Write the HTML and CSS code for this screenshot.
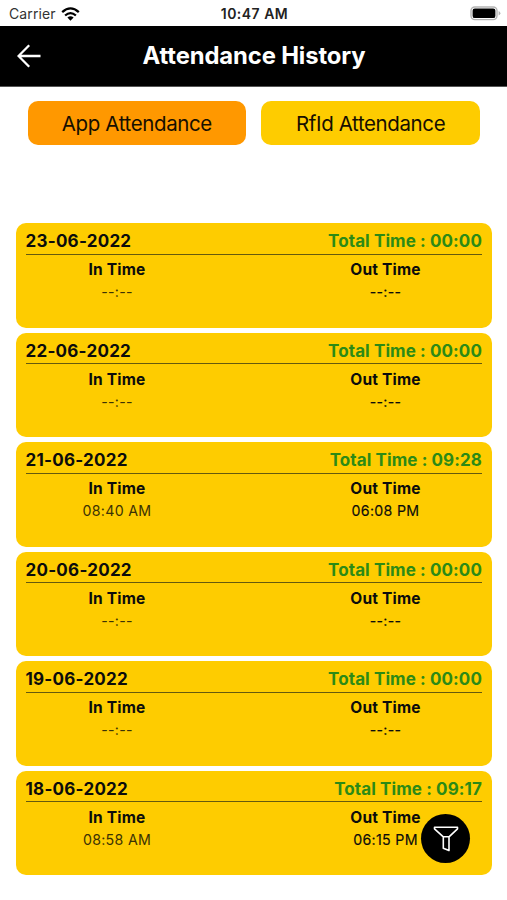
FILE: index.html
```html
<!DOCTYPE html>
<html lang="en">
<head>
<meta charset="utf-8">
<title>Attendance History</title>
<link rel="stylesheet" href="styles.css">
</head>
<body>
<div class="status">
  <div class="carrier"><span>Carrier</span>
    <svg class="wifi" width="19" height="14" viewBox="0 0 19 14"><g fill="none" stroke="#000" stroke-width="2.3"><path d="M1.2 5.2Q9.5-2.4 17.8 5.2"/><path d="M4.1 8.5Q9.5 3.7 14.9 8.5"/></g><path d="M6.4 10.6Q9.5 8 12.6 10.6L9.5 13.8Z"/></svg>
  </div>
  <div class="clock">10:47 AM</div>
  <svg class="battery" width="31" height="15" viewBox="0 0 31 15"><rect x="1" y="1" width="26" height="12.6" rx="3.8" fill="#fff" stroke="#b4b4b4" stroke-width="1.4"/><rect x="2.6" y="2.5" width="22.8" height="9.6" rx="2.2"/><path d="M28.6 5.1Q30.4 5.8 30.4 7.3T28.6 9.5Z" fill="#b4b4b4"/></svg>
</div>
<header class="header">
  <svg class="back" width="24" height="24" viewBox="0 0 24 24" fill="none" stroke="#fff" stroke-width="2.3"><path d="M23.5 12H2M12.2 1.2L1.5 12L12.2 22.8"/></svg>
  <h1 class="title">Attendance History</h1>
</header>
<nav class="tabs">
  <button class="tab active"><span>App Attendance</span></button>
  <button class="tab"><span>RfId Attendance</span></button>
</nav>
<main class="list">
  <article class="card">
    <div class="top"><span class="date">23-06-2022</span><span class="total">Total Time : 00:00</span></div>
    <div class="times"><div class="in"><b>In Time</b><span>--:--</span></div><div class="out"><b>Out Time</b><span>--:--</span></div></div>
  </article>
  <article class="card">
    <div class="top"><span class="date">22-06-2022</span><span class="total">Total Time : 00:00</span></div>
    <div class="times"><div class="in"><b>In Time</b><span>--:--</span></div><div class="out"><b>Out Time</b><span>--:--</span></div></div>
  </article>
  <article class="card">
    <div class="top"><span class="date">21-06-2022</span><span class="total">Total Time : 09:28</span></div>
    <div class="times"><div class="in"><b>In Time</b><span>08:40 AM</span></div><div class="out"><b>Out Time</b><span>06:08 PM</span></div></div>
  </article>
  <article class="card">
    <div class="top"><span class="date">20-06-2022</span><span class="total">Total Time : 00:00</span></div>
    <div class="times"><div class="in"><b>In Time</b><span>--:--</span></div><div class="out"><b>Out Time</b><span>--:--</span></div></div>
  </article>
  <article class="card">
    <div class="top"><span class="date">19-06-2022</span><span class="total">Total Time : 00:00</span></div>
    <div class="times"><div class="in"><b>In Time</b><span>--:--</span></div><div class="out"><b>Out Time</b><span>--:--</span></div></div>
  </article>
  <article class="card">
    <div class="top"><span class="date">18-06-2022</span><span class="total">Total Time : 09:17</span></div>
    <div class="times"><div class="in"><b>In Time</b><span>08:58 AM</span></div><div class="out"><b>Out Time</b><span>06:15 PM</span></div></div>
  </article>
</main>
<button class="filter" aria-label="Filter">
  <svg width="26" height="26" viewBox="0 0 26 26" fill="none" stroke="#fff" stroke-width="1.6" stroke-linejoin="round"><path d="M1.5 1.3H24.5V2.8L16 10.8V24.6L10.3 22.2V10.8L1.5 2.8ZM10.3 10.8H16"/></svg>
</button>
</body>
</html>
```

FILE: styles.css
```css
* { box-sizing: border-box; }
body {
  margin: 0;
  width: 507px;
  height: 900px;
  overflow: hidden;
  position: relative;
  background: #fff;
  color: #0c0c0c;
  font-family: Inter, "Liberation Sans", sans-serif;
}
.status {
  height: 25.5px;
  display: grid;
  grid-template-columns: 1fr auto 1fr;
  align-items: center;
  padding: 2px 6px 0 9px;
}
.carrier { display: flex; align-items: center; gap: 5.5px; font-size: 14px; letter-spacing: 0.1px; line-height: 20px; color: #333; }
.clock { font-size: 14px; font-weight: 600; letter-spacing: 0.48px; line-height: 20px; color: #222; margin-left: -1px; }
.battery { justify-self: end; }
.header {
  height: 61px;
  background: #000;
  display: grid;
  grid-template-columns: 80px 1fr 80px;
  align-items: center;
  border-bottom: 1px solid #555;
}
.back { margin-left: 17px; }
.title { margin: 0; padding-left: 1px; color: #fff; text-align: center; font-size: 23.8px; font-weight: 700; letter-spacing: -0.12px; line-height: 30px; white-space: nowrap; }
.tabs { display: flex; gap: 15px; padding: 14.5px 27px 0 27.5px; height: 136.8px; }
.tab {
  flex: 1;
  height: 44px;
  padding: 0;
  border: 0;
  border-radius: 10px;
  background: #fecc00;
  color: #160f00;
  font-family: inherit;
  font-size: 20.5px;
  letter-spacing: -0.38px;
  white-space: nowrap;
}
.active { background: #ff9800; }
.list { display: flex; flex-direction: column; gap: 5px; padding: 0 15px 0 15.5px; }
.card { height: 104.5px; border-radius: 10px; background: #fecc00; padding: 0 10px; }
.top {
  height: 31.5px;
  display: flex;
  justify-content: space-between;
  padding-top: 6px;
  border-bottom: 1px solid #65590e;
  font-size: 17px;
  font-weight: 700;
  line-height: 24px;
}
.date { letter-spacing: 0.25px; }
.total { color: #2c8a16; letter-spacing: 0.1px; }
.times { display: flex; justify-content: space-between; text-align: center; padding-top: 4.3px; }
.in { width: 183px; }
.out { width: 193px; }
.times b { display: block; font-size: 15.5px; font-weight: 700; letter-spacing: 0.2px; line-height: 22px; }
.times span { display: block; font-size: 14.2px; letter-spacing: 0.3px; line-height: 22px; }
.in span { color: #3b3205; }
.out span { -webkit-text-stroke: 0.15px #0c0c0c; }
.filter {
  position: absolute;
  left: 421px;
  top: 814px;
  width: 49px;
  height: 49px;
  padding: 0;
  border: 0;
  border-radius: 50%;
  background: #000;
  display: grid;
  place-items: center;
}
```
